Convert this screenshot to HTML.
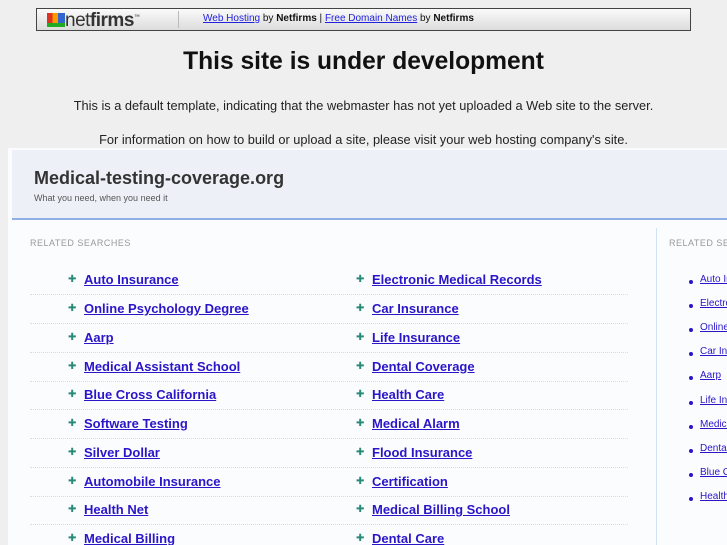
<!DOCTYPE html>
<html><head><meta charset="utf-8"><style>
*{margin:0;padding:0;box-sizing:border-box}
html,body{width:727px;height:545px;overflow:hidden}
body{background:#efefef;font-family:"Liberation Sans",sans-serif;position:relative}
.bar{position:absolute;left:36px;top:8px;width:655px;height:23px;border:1px solid #444;background:linear-gradient(#fafafa,#dcdcdc);}
.logo{position:absolute;left:10px;top:1px;font-size:19px;color:#333;letter-spacing:-0.5px;white-space:nowrap}
.logo b{font-weight:bold}
.sep{position:absolute;left:141px;top:2px;width:1px;height:17px;background:#bbb}
.barT{position:absolute;left:166px;top:4px;font-size:10px;color:#111;white-space:nowrap}
.barT a{color:#2222dd}
h1{position:absolute;left:0;width:727px;top:48px;text-align:center;font-size:24.6px;font-weight:bold;color:#111}
.p{position:absolute;left:0;width:727px;text-align:center;font-size:12.8px;color:#222;white-space:nowrap}
.panel{position:absolute;left:8px;top:148px;width:719px;height:397px;background:#fbfcfe}
.hdr{position:absolute;left:12px;top:150px;width:715px;height:70px;background:#edf1f7;border-bottom:2px solid #8fb0e6}
.title{position:absolute;left:34px;top:168px;font-size:18px;font-weight:bold;color:#333;white-space:nowrap}
.sub{position:absolute;left:34px;top:193px;font-size:9px;color:#555;white-space:nowrap}
.rs{position:absolute;top:238px;font-size:9px;color:#999;letter-spacing:.5px;white-space:nowrap}
.vl{position:absolute;left:656px;top:228px;width:1px;height:317px;background:#d3e1f5}
.row{position:absolute;left:30px;width:598px;height:29px;border-bottom:1px dotted #d8dbe8}
.it{position:absolute;font-size:13px;font-weight:bold;color:#2a16c8;text-decoration:underline;white-space:nowrap}
.ar{position:absolute;color:#2a8a7a;font-size:10px}
.rl{position:absolute;left:700px;font-size:10px;color:#2a16c8;text-decoration:underline;white-space:nowrap}
.dot{position:absolute;left:689px;width:4px;height:4px;border-radius:2px;background:#2a16c8}
</style></head><body>
<div class="bar">
 <div class="logo"><span style="display:inline-block;width:18px;height:14px;vertical-align:-1px;background:linear-gradient(90deg,#d32 0 30%,#f90 30% 60%,#36c 60%);border-bottom:4px solid #2a2"></span>net<b>firms</b><sup style="font-size:6px">™</sup></div>
 <div class="sep"></div>
 <div class="barT"><a href="#">Web Hosting</a> by <b>Netfirms</b> | <a href="#">Free Domain Names</a> by <b>Netfirms</b></div>
</div>
<h1>This site is under development</h1>
<div class="p" style="top:98px">This is a default template, indicating that the webmaster has not yet uploaded a Web site to the server.</div>
<div class="p" style="top:132px">For information on how to build or upload a site, please visit your web hosting company's site.</div>
<div class="panel"></div>
<div class="hdr"></div>
<div class="title">Medical-testing-coverage.org</div>
<div class="sub">What you need, when you need it</div>
<div class="rs" style="left:30px">RELATED SEARCHES</div>
<div class="rs" style="left:669px">RELATED SEARCHES</div>
<div class="vl"></div>
<div class="row" style="top:266px"></div><div class="row" style="top:295px"></div><div class="row" style="top:324px"></div><div class="row" style="top:353px"></div><div class="row" style="top:381px"></div><div class="row" style="top:410px"></div><div class="row" style="top:439px"></div><div class="row" style="top:468px"></div><div class="row" style="top:496px"></div><div class="row" style="top:525px;border:none"></div>

<span class="ar" style="left:68px;top:274px">✚</span><span class="it" style="left:84px;top:272px">Auto Insurance</span>
<span class="ar" style="left:356px;top:274px">✚</span><span class="it" style="left:372px;top:272px">Electronic Medical Records</span>
<span class="ar" style="left:68px;top:303px">✚</span><span class="it" style="left:84px;top:301px">Online Psychology Degree</span>
<span class="ar" style="left:356px;top:303px">✚</span><span class="it" style="left:372px;top:301px">Car Insurance</span>
<span class="ar" style="left:68px;top:332px">✚</span><span class="it" style="left:84px;top:330px">Aarp</span>
<span class="ar" style="left:356px;top:332px">✚</span><span class="it" style="left:372px;top:330px">Life Insurance</span>
<span class="ar" style="left:68px;top:361px">✚</span><span class="it" style="left:84px;top:359px">Medical Assistant School</span>
<span class="ar" style="left:356px;top:361px">✚</span><span class="it" style="left:372px;top:359px">Dental Coverage</span>
<span class="ar" style="left:68px;top:389px">✚</span><span class="it" style="left:84px;top:387px">Blue Cross California</span>
<span class="ar" style="left:356px;top:389px">✚</span><span class="it" style="left:372px;top:387px">Health Care</span>
<span class="ar" style="left:68px;top:418px">✚</span><span class="it" style="left:84px;top:416px">Software Testing</span>
<span class="ar" style="left:356px;top:418px">✚</span><span class="it" style="left:372px;top:416px">Medical Alarm</span>
<span class="ar" style="left:68px;top:447px">✚</span><span class="it" style="left:84px;top:445px">Silver Dollar</span>
<span class="ar" style="left:356px;top:447px">✚</span><span class="it" style="left:372px;top:445px">Flood Insurance</span>
<span class="ar" style="left:68px;top:476px">✚</span><span class="it" style="left:84px;top:474px">Automobile Insurance</span>
<span class="ar" style="left:356px;top:476px">✚</span><span class="it" style="left:372px;top:474px">Certification</span>
<span class="ar" style="left:68px;top:504px">✚</span><span class="it" style="left:84px;top:502px">Health Net</span>
<span class="ar" style="left:356px;top:504px">✚</span><span class="it" style="left:372px;top:502px">Medical Billing School</span>
<span class="ar" style="left:68px;top:533px">✚</span><span class="it" style="left:84px;top:531px">Medical Billing</span>
<span class="ar" style="left:356px;top:533px">✚</span><span class="it" style="left:372px;top:531px">Dental Care</span>

<span class="dot" style="top:280px"></span><span class="rl" style="top:274px">Auto Insurance</span>
<span class="dot" style="top:304px"></span><span class="rl" style="top:298px">Electronic Medical Records</span>
<span class="dot" style="top:328px"></span><span class="rl" style="top:322px">Online Psychology Degree</span>
<span class="dot" style="top:352px"></span><span class="rl" style="top:346px">Car Insurance</span>
<span class="dot" style="top:376px"></span><span class="rl" style="top:370px">Aarp</span>
<span class="dot" style="top:401px"></span><span class="rl" style="top:395px">Life Insurance</span>
<span class="dot" style="top:425px"></span><span class="rl" style="top:419px">Medical Assistant School</span>
<span class="dot" style="top:449px"></span><span class="rl" style="top:443px">Dental Coverage</span>
<span class="dot" style="top:473px"></span><span class="rl" style="top:467px">Blue Cross California</span>
<span class="dot" style="top:497px"></span><span class="rl" style="top:491px">Health Care</span>
</body></html>
